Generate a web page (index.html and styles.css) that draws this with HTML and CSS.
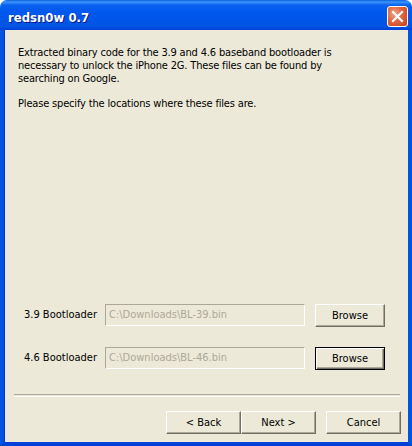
FILE: index.html
```html
<!DOCTYPE html>
<html>
<head>
<meta charset="utf-8">
<title>redsn0w 0.7</title>
<link rel="stylesheet" href="styles.css">
</head>
<body>
<div class="window">
  <div class="titlebar">
    <span class="title">redsn0w 0.7</span>
    <button class="close" aria-label="Close">
      <svg width="13" height="13" viewBox="0 0 13 13"><path d="M2 2 L11 11 M11 2 L2 11" stroke="#fff" stroke-width="2.2" stroke-linecap="square"/></svg>
    </button>
  </div>
  <div class="client">
    <div class="intro">
      <p>Extracted binary code for the 3.9 and 4.6 baseband bootloader is necessary to unlock the iPhone 2G. These files can be found by searching on Google.</p>
      <p>Please specify the locations where these files are.</p>
    </div>
    <div class="spacer"></div>
    <div class="rows">
      <div class="row">
        <span class="label">3.9 Bootloader</span>
        <div class="edit">C:\Downloads\BL-39.bin</div>
        <button class="btn browse">Browse</button>
      </div>
      <div class="row">
        <span class="label">4.6 Bootloader</span>
        <div class="edit">C:\Downloads\BL-46.bin</div>
        <button class="btn browse focus">Browse</button>
      </div>
    </div>
    <div class="separator"></div>
    <div class="footer">
      <button class="btn nav">&lt; Back</button>
      <button class="btn nav">Next &gt;</button>
      <button class="btn nav cancel">Cancel</button>
    </div>
  </div>
</div>
</body>
</html>
```
FILE: styles.css
```css
html, body {
  margin: 0;
  padding: 0;
  background: #ffffff;
}
.window {
  width: 412px;
  height: 446px;
  display: flex;
  flex-direction: column;
  font-family: Tahoma, "DejaVu Sans Condensed", "Liberation Sans", sans-serif;
  font-size: 11px;
  color: #000;
}
.titlebar {
  height: 30px;
  flex: none;
  display: flex;
  align-items: center;
  justify-content: space-between;
  padding: 0 4px 0 8px;
  box-sizing: border-box;
  border-radius: 7px 7px 0 0;
  background: linear-gradient(to bottom, #0a5fd8 0px, #3d95ff 2px, #0a62f0 5px, #0058ee 12px, #0055e5 22px, #0054e3 27px, #003dd7 30px);
}
.title {
  color: #fff;
  font-family: "DejaVu Sans Condensed", "DejaVu Sans", sans-serif;
  font-weight: bold;
  font-size: 13px;
  text-shadow: 1px 1px 0 #0a1883;
  padding-top: 4px;
}
.close {
  width: 21px;
  height: 21px;
  padding: 0;
  margin-top: 2px;
  border: 1px solid #fff;
  border-radius: 3px;
  background: radial-gradient(circle at 35% 35%, #f0a58a 0%, #e2643e 45%, #c4401c 100%);
  display: flex;
  align-items: center;
  justify-content: center;
}
.client {
  flex: 1;
  display: flex;
  flex-direction: column;
  background: #ece9d8;
  border-left: 4px solid #0054e3;
  border-right: 4px solid #0054e3;
  border-bottom: 4px solid #0041d8;
  box-shadow: inset 1px 0 0 #0831d9;
}
.intro {
  padding: 16px 50px 0 14px;
  letter-spacing: -0.17px;
}
.intro p {
  margin: 0 0 12px 0;
  line-height: 13px;
}
.spacer {
  flex: 1;
}
.rows {
  display: flex;
  flex-direction: column;
  gap: 21px;
}
.row {
  display: flex;
  align-items: center;
  height: 22px;
  padding-left: 20px;
}
.label {
  width: 81px;
  margin-top: -2px;
}
.edit {
  height: 20px;
  line-height: 20px;
  box-sizing: content-box;
  border-top: 1px solid #aca899;
  border-left: 1px solid #aca899;
  border-bottom: 1px solid #fff;
  border-right: 1px solid #fff;
  color: #aca899;
  padding-left: 3px;
  width: 195px;
  white-space: nowrap;
}
.btn {
  font-family: inherit;
  font-size: 11px;
  color: #000;
  background: #ece9d8;
  box-sizing: border-box;
  border-top: 1px solid #fff;
  border-left: 1px solid #fff;
  border-right: 1px solid #716f64;
  border-bottom: 1px solid #716f64;
  box-shadow: inset -1px -1px 0 #aca899;
  padding: 0;
}
.browse {
  width: 70px;
  height: 23px;
  margin-left: 10px;
}
.browse.focus {
  border: 1px solid #000;
  box-shadow: inset 1px 1px 0 #fff, inset -1px -1px 0 #716f64, inset -2px -2px 0 #aca899;
}
.separator {
  margin: 25px 8px 0 10px;
  height: 1px;
  border-top: 1px solid #aca899;
  border-bottom: 1px solid #fff;
}
.footer {
  display: flex;
  justify-content: flex-end;
  padding: 14px 7px 8px 0;
}
.nav {
  width: 75px;
  height: 23px;
}
.cancel {
  margin-left: 10px;
}
```
